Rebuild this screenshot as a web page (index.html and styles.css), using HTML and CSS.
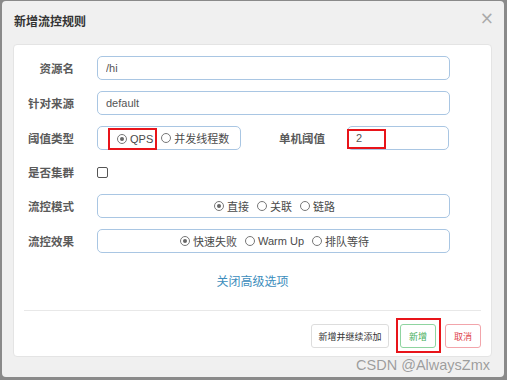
FILE: index.html
```html
<!DOCTYPE html>
<html lang="zh-CN">
<head>
<meta charset="UTF-8">
<title>新增流控规则</title>
<link rel="stylesheet" href="styles.css">
</head>
<body>
<div class="modal">
  <div class="modal-header">
    <h4 class="modal-title">新增流控规则</h4>
    <span class="close">&times;</span>
  </div>

  <div class="panel">
    <div class="row">
      <label class="label">资源名</label>
      <input class="input wide" type="text" value="/hi">
    </div>

    <div class="row">
      <label class="label">针对来源</label>
      <input class="input wide" type="text" value="default">
    </div>

    <div class="row">
      <label class="label">阈值类型</label>
      <div class="group grade">
        <span class="opt opt-marked"><span class="radio on"></span>QPS</span>
        <span class="opt"><span class="radio"></span>并发线程数</span>
      </div>
      <label class="label label-right">单机阈值</label>
      <div class="count-wrap">
        <input class="input count" type="text" value="2">
        <span class="mark mark-count"></span>
      </div>
    </div>

    <div class="row row-short">
      <label class="label">是否集群</label>
      <span class="checkbox"></span>
    </div>

    <div class="row">
      <label class="label">流控模式</label>
      <div class="group wide center">
        <span class="opt"><span class="radio on"></span>直接</span>
        <span class="opt"><span class="radio"></span>关联</span>
        <span class="opt"><span class="radio"></span>链路</span>
      </div>
    </div>

    <div class="row">
      <label class="label">流控效果</label>
      <div class="group wide center">
        <span class="opt"><span class="radio on"></span>快速失败</span>
        <span class="opt"><span class="radio"></span>Warm Up</span>
        <span class="opt"><span class="radio"></span>排队等待</span>
      </div>
    </div>

    <a class="toggle-link" href="#">关闭高级选项</a>

    <div class="footer">
      <button class="btn btn-default" type="button">新增并继续添加</button>
      <span class="btn-wrap">
        <button class="btn btn-success" type="button">新增</button>
        <span class="mark mark-btn"></span>
      </span>
      <button class="btn btn-danger" type="button">取消</button>
    </div>
  </div>

  <span class="watermark">CSDN @AlwaysZmx</span>
</div>
</body>
</html>
```

FILE: styles.css
```css
body {
  margin: 0;
  padding: 1px 3px 3px 2px;
  background: #8a8a8a;
  font-family: "Liberation Sans", "Noto Sans CJK SC", sans-serif;
  color: #555;
}

.modal {
  position: relative;
  width: 502px;
  height: 376px;
  box-sizing: border-box;
  background: #f0f0f0;
  border-radius: 4px;
}

.modal-header {
  display: flex;
  justify-content: space-between;
  height: 43px;
  box-sizing: border-box;
  padding: 11px 10px 0 12px;
}

.modal-title {
  margin: 0;
  font-size: 12px;
  line-height: 18px;
  font-weight: 700;
  color: #333;
  font-family: "Noto Sans CJK SC", sans-serif;
}

.close {
  font-size: 17px;
  line-height: 12px;
  color: #aaa;
  font-family: "DejaVu Sans", sans-serif;
}

.panel {
  margin-left: 11px;
  width: 479px;
  height: 313px;
  box-sizing: border-box;
  padding-top: 11px;
  background: #fff;
  border: 1px solid #e4e4e4;
  border-radius: 4px;
}

.row {
  display: flex;
  align-items: center;
  height: 24px;
  margin-bottom: 11px;
}

.row-short {
  height: 22px;
}

.label {
  width: 60px;
  margin-right: 23px;
  text-align: right;
  font-size: 11.5px;
  font-weight: 700;
  color: #5a5a5a;
  font-family: "Noto Sans CJK SC", sans-serif;
  white-space: nowrap;
}

.label-right {
  width: auto;
  flex: 1;
  margin-right: 22px;
}

.input {
  height: 24px;
  box-sizing: border-box;
  padding: 0 8px;
  border: 1px solid #a9c6e3;
  border-radius: 5px;
  font-family: "Liberation Sans", "Noto Sans CJK SC", sans-serif;
  font-size: 11px;
  color: #555;
  outline: none;
}

.wide {
  width: 353px;
}

.count {
  width: 102px;
}

.count-wrap {
  position: relative;
  margin-right: 42px;
}

.group {
  display: flex;
  align-items: center;
  height: 24px;
  box-sizing: border-box;
  border: 1px solid #a9c6e3;
  border-radius: 5px;
  font-size: 11px;
  font-family: "Liberation Sans", "Noto Sans CJK SC", sans-serif;
  color: #4a4a4a;
}

.grade {
  width: 144px;
  padding-left: 10px;
}

.center {
  justify-content: center;
  padding-left: 2px;
}

.opt {
  display: inline-flex;
  align-items: center;
  margin-right: 8px;
  white-space: nowrap;
}

.opt:last-child {
  margin-right: 0;
}

.opt-marked {
  align-self: flex-end;
  height: 22px;
  box-sizing: border-box;
  margin: 0 4px -1px 0;
  padding: 0 2px 0 7px;
  border: 2px solid #e8141a;
}

.radio {
  width: 8px;
  height: 8px;
  margin-right: 3px;
  border: 1px solid #777;
  border-radius: 50%;
  display: inline-flex;
  align-items: center;
  justify-content: center;
  background: #fff;
}

.radio.on::after {
  content: "";
  width: 4px;
  height: 4px;
  border-radius: 50%;
  background: #666;
}

.checkbox {
  width: 9px;
  height: 9px;
  border: 1px solid #555;
  border-radius: 2px;
}

.mark {
  position: absolute;
  box-sizing: border-box;
  border: 2px solid #e8141a;
}

.mark-count {
  left: 0;
  top: 3px;
  width: 39px;
  height: 20px;
}

.toggle-link {
  display: block;
  margin: 19px 0 20px;
  text-align: center;
  line-height: 18px;
  font-size: 12px;
  color: #3c8dbc;
  text-decoration: none;
  font-family: "Noto Sans CJK SC", sans-serif;
}

.footer {
  display: flex;
  justify-content: flex-end;
  align-items: center;
  margin: 0 10px 0 10px;
  padding-top: 13px;
  border-top: 1px solid #e8e8e8;
}

.btn {
  height: 24px;
  padding: 0;
  background: #fff;
  border: 1px solid #ddd;
  border-radius: 3px;
  font-size: 9px;
  font-family: "Noto Sans CJK SC", sans-serif;
  color: #333;
}

.btn-default {
  width: 78px;
  margin-right: 11px;
}

.btn-wrap {
  position: relative;
  display: flex;
  margin-right: 9px;
}

.btn-success {
  width: 36px;
  border-color: #8fd4a0;
  color: #3fae5a;
}

.btn-danger {
  width: 36px;
  border-color: #f2a5ab;
  color: #e0434e;
}

.mark-btn {
  left: -4px;
  top: -6px;
  right: -5px;
  bottom: -5px;
}

.watermark {
  position: absolute;
  top: 356px;
  right: 14px;
  font-size: 14.5px;
  line-height: 16px;
  color: rgba(120, 120, 120, 0.7);
  font-family: "Liberation Sans", sans-serif;
}
```
